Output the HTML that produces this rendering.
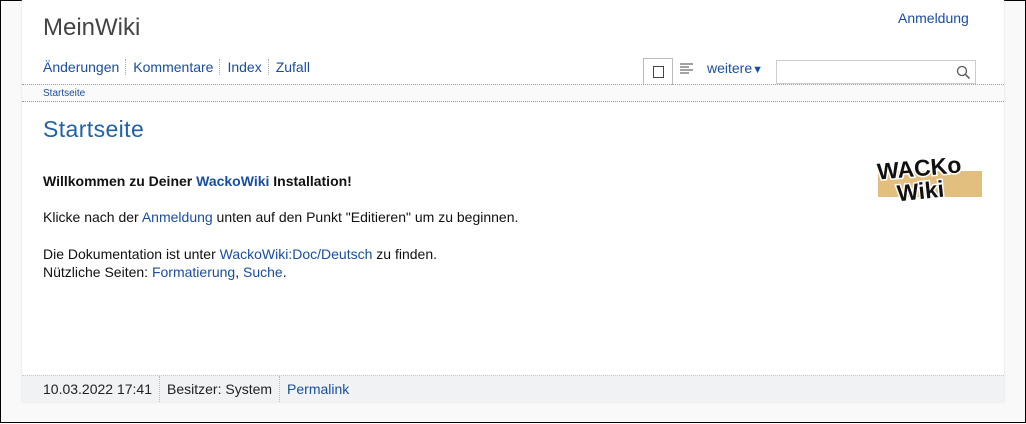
<!DOCTYPE html>
<html><head><meta charset="utf-8"><style>
*{margin:0;padding:0;box-sizing:border-box}
body{width:1026px;height:424px;background:#fff;font-family:"Liberation Sans",Arial,sans-serif;overflow:hidden}
#frame{position:absolute;left:0;top:0;width:1026px;height:423px;border:1px solid #000;background:#f9f9f9}
#page{position:absolute;left:22px;top:0;width:982px;height:402px;background:#fff;box-shadow:0 0 2px #ddd}
a{color:#1a4ea0;text-decoration:none}
.t{position:absolute;white-space:nowrap}
.title{left:21px;top:14px;font-size:24px;color:#444}
.login{left:876px;top:10px;font-size:14px}
.nav{left:21px;top:59px;font-size:14px}
.nav span{display:inline-block;padding:0 6px 0 7px;border-left:1px dotted #aaa}
.nav span:first-child{padding-left:0;border:none}
.dl{position:absolute;left:0;width:982px;border-top:1px dotted #999}
.crumb{position:absolute;left:0;top:85px;width:982px;height:16px;background:#fafafa}
.h1{left:21px;top:116px;font-size:23px;color:#2062a8;letter-spacing:0.4px}
.body{left:21px;font-size:14px;color:#111}
.foot{position:absolute;left:0;top:375px;width:982px;height:27px;background:#f0f2f3;border-top:1px dotted #ccc;font-size:14px;color:#222}
.foot span{display:inline-block;padding:0 7px;border-left:1px dotted #bbb;line-height:26px}
.foot span:first-child{border:none;padding-left:21px}
.logo{font-weight:bold;color:#111;font-size:23px;paint-order:stroke;-webkit-text-stroke:3px #fff}
</style></head><body>
<div id="frame"></div>
<div id="page">
<div class="t title">MeinWiki</div>
<div class="t login"><a>Anmeldung</a></div>
<div class="t nav"><span><a>Änderungen</a></span><span><a>Kommentare</a></span><span><a>Index</a></span><span><a>Zufall</a></span></div>
<div style="position:absolute;left:621px;top:58px;width:30px;height:27px;border:1px solid #bbb;border-bottom:none;background:#fff"><div style="position:absolute;left:9px;top:7px;width:11px;height:12px;border:1.5px solid #444"></div></div>
<svg style="position:absolute;left:658px;top:63px" width="14" height="12"><path d="M0 1h13M0 4h9M0 7h13M0 10h9" stroke="#444" stroke-width="1"/></svg>
<div class="t" style="left:685px;top:60px;font-size:14px;color:#1a4ea0">weitere<span style="font-size:11px">▼</span></div>
<div style="position:absolute;left:754px;top:60px;width:200px;height:24px;border:1px solid #ccc;background:#fff"><svg style="position:absolute;right:4px;top:4px" width="15" height="15"><circle cx="6" cy="6" r="4.5" fill="none" stroke="#555" stroke-width="1.3"/><path d="M9.5 9.5l4 4" stroke="#555" stroke-width="1.5"/></svg></div>
<div class="crumb"></div>
<div class="dl" style="top:84px"></div>
<div class="dl" style="top:101px"></div>
<div class="t" style="left:21px;top:88px;font-size:10px"><a>Startseite</a></div>
<div class="t h1">Startseite</div>
<div class="t body" style="top:173px;font-weight:bold">Willkommen zu Deiner <a>WackoWiki</a> Installation!</div>
<div class="t body" style="top:209px">Klicke nach der <a>Anmeldung</a> unten auf den Punkt "Editieren" um zu beginnen.</div>
<div class="t body" style="top:246px">Die Dokumentation ist unter <a>WackoWiki:Doc/Deutsch</a> zu finden.</div>
<div class="t body" style="top:264px">Nützliche Seiten: <a>Formatierung</a>, <a>Suche</a>.</div>
<div style="position:absolute;left:856px;top:171px;width:104px;height:26px;background:#e2bf7e"></div>
<div class="t logo" style="left:855px;top:155px;transform:rotate(-5deg)">WACKo</div>
<div class="t logo" style="left:875px;top:178px;transform:rotate(-6deg)">Wiki</div>
<div class="foot"><span>10.03.2022 17:41</span><span>Besitzer: System</span><span><a>Permalink</a></span></div>
</div>
</body></html>
